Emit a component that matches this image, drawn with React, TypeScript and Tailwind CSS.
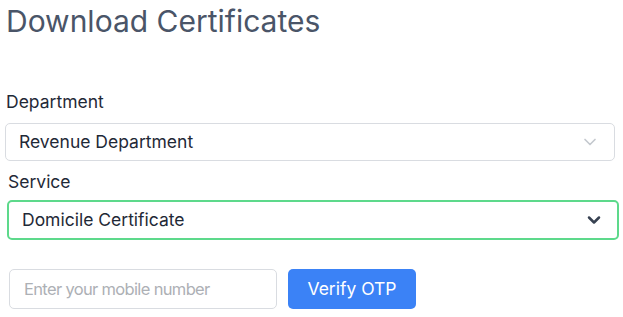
import { ChevronDown } from "lucide-react"

const App = () => {
    return <div className="w-[623px] h-[317px] bg-white overflow-hidden text-[#1f2937]" style={{ fontFamily: "Inter, 'Noto Sans', sans-serif" }}>
        <h1 className="pl-[6px] pt-[1px] text-[30px] leading-[40px] text-[#4a5568] font-normal">
            Download Certificates
        </h1>
        <div className="mt-[49px] pl-[6px] text-[17.5px] leading-6">Department</div>
        <div className="mt-[9px] ml-[5px] w-[610px] h-[38px] flex items-center justify-between border border-[#d9dce1] rounded-[5px] pl-[13px] pr-[14px]">
            <span className="text-[17.5px]">Revenue Department</span>
            <ChevronDown size={20} strokeWidth={2} className="text-[#c4c8ce]" />
        </div>
        <div className="mt-[9px] pl-[8px] text-[17.5px] leading-6">Service</div>
        <div className="mt-[6px] ml-[7px] w-[612px] h-[40px] flex items-center justify-between border-2 border-[#5dd98b] rounded-[5px] pl-[13px] pr-[13px]">
            <span className="text-[17.5px]">Domicile Certificate</span>
            <ChevronDown size={20} strokeWidth={3} className="text-[#374151]" />
        </div>
        <div className="mt-[29px] ml-[9px] flex gap-[11px]">
            <input
                placeholder="Enter your mobile number"
                className="w-[268px] h-[40px] border border-[#d9dce1] rounded-[5px] px-[14px] text-[16.5px] tracking-[-0.04em] outline-none placeholder:text-[#adb0b5]"
            />
            <button className="w-[128px] h-[40px] bg-[#3b82f6] text-white text-[17.5px] rounded-[5px]">
                Verify OTP
            </button>
        </div>
    </div>
}

export default App
